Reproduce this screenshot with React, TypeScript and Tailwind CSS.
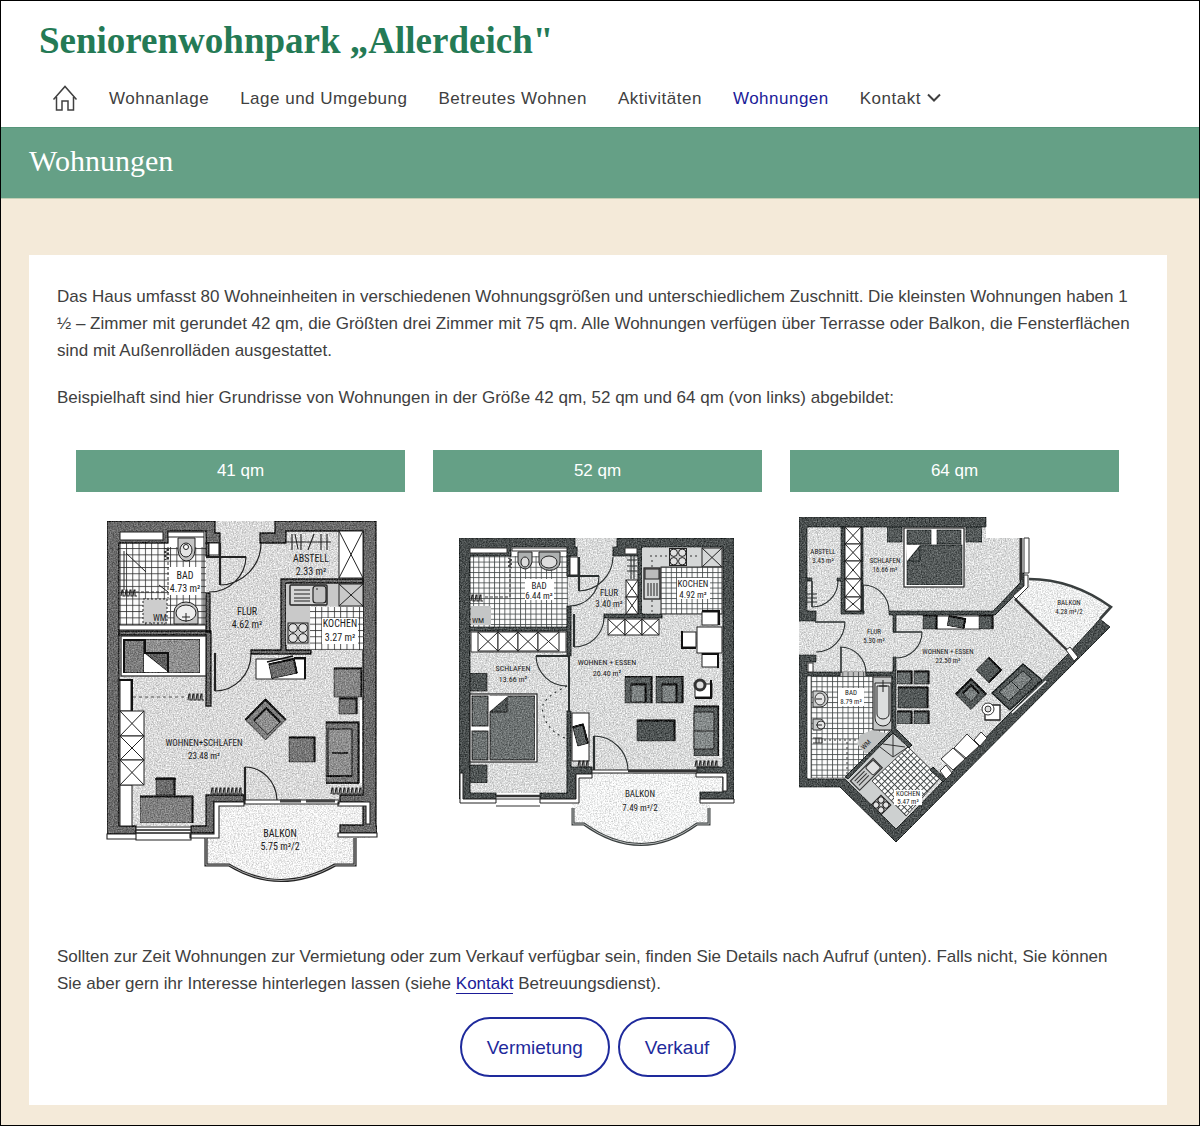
import React from 'react';

const NAV_ITEMS = [
  { label: 'Wohnanlage' },
  { label: 'Lage und Umgebung' },
  { label: 'Betreutes Wohnen' },
  { label: 'Aktivitäten' },
  { label: 'Wohnungen', active: true },
  { label: 'Kontakt', submenu: true }
];

const LABEL_FONT = '"Roboto Condensed", "Liberation Sans Narrow", Lato, sans-serif';

type Box = { x: number; y: number; w: number; h: number };

// shared patterns and the paper grain of the floor plans
const PlanDefs: React.FC = () => (
  <svg className="absolute w-0 h-0" aria-hidden="true">
    <defs>
      <pattern id="tiles" width="6.3" height="6.3" patternUnits="userSpaceOnUse">
        <rect width="6.3" height="6.3" fill="#fdfdfd" />
        <path d="M0 .5H6.3M.5 0V6.3" stroke="#2b2b2b" strokeWidth="0.8" />
      </pattern>
      <pattern id="tilesSmall" width="5.2" height="5.2" patternUnits="userSpaceOnUse">
        <rect width="5.2" height="5.2" fill="#fdfdfd" />
        <path d="M0 .5H5.2M.5 0V5.2" stroke="#3c4242" strokeWidth="0.8" />
      </pattern>
      <pattern id="tilesDiagonal" width="4.6" height="4.6" patternUnits="userSpaceOnUse" patternTransform="rotate(45)">
        <rect width="4.6" height="4.6" fill="#fdfdfd" />
        <path d="M0 .5H4.6M.5 0V4.6" stroke="#3c4242" strokeWidth="0.9" />
      </pattern>
      <filter id="grain" x="0" y="0" width="1" height="1" colorInterpolationFilters="sRGB">
        <feTurbulence type="fractalNoise" baseFrequency="0.75" numOctaves="2" seed="4" result="noise" />
        <feColorMatrix in="noise" values="1.6 0 0 0 -0.3  1.6 0 0 0 -0.3  1.6 0 0 0 -0.3  0 0 0 0 1" result="gray" />
        <feComposite in="SourceGraphic" in2="gray" operator="arithmetic" k1="0" k2="1" k3="0.32" k4="-0.16" result="mix" />
        <feComposite in="mix" in2="SourceGraphic" operator="in" />
      </filter>
    </defs>
  </svg>
);

const Label: React.FC<{ x: number; y: number; name: string; area: string; size?: number; gap?: number }> = ({
  x, y, name, area, size = 10, gap = 13
}) => (
  <g fontSize={size} textAnchor="middle" fill="#1c1c1c" style={{ fontFamily: LABEL_FONT }}>
    <text x={x} y={y}>{name}</text>
    <text x={x} y={y + gap}>{area}</text>
  </g>
);

// wardrobe box with a cross
const Crossed: React.FC<Box & { fill?: string }> = ({ x, y, w, h, fill = '#fff' }) => (
  <g stroke="#222" strokeWidth="1">
    <rect x={x} y={y} width={w} height={h} fill={fill} />
    <path d={`M${x} ${y}l${w} ${h}M${x + w} ${y}l${-w} ${h}`} />
  </g>
);

// dark piece of furniture with a heavy top and right edge
const Block: React.FC<Box & { fill?: string; rotate?: number }> = ({ x, y, w, h, fill = '#6c6c6c', rotate = 0 }) => (
  <g transform={`rotate(${rotate} ${x + w / 2} ${y + h / 2})`}>
    <rect x={x} y={y} width={w} height={h} fill={fill} stroke="#1c1c1c" strokeWidth="0.8" />
    <path d={`M${x} ${y + 0.5}H${x + w - 0.5}V${y + h}`} fill="none" stroke="#141414" strokeWidth="2" />
  </g>
);

const Stove: React.FC<{ x: number; y: number; s: number; rotate?: number }> = ({ x, y, s, rotate = 0 }) => (
  <g transform={`translate(${x} ${y}) rotate(${rotate})`} fill="#e2e2e2" stroke="#222" strokeWidth="1">
    <rect x={-s / 2} y={-s / 2} width={s} height={s} fill="#cfcfcf" />
    <circle cx={-s / 4} cy={-s / 4} r={s / 4.6} />
    <circle cx={s / 4} cy={-s / 4} r={s / 4.6} />
    <circle cx={-s / 4} cy={s / 4} r={s / 4.6} />
    <circle cx={s / 4} cy={s / 4} r={s / 4.6} />
  </g>
);

const Radiator: React.FC<{ x: number; y: number; w: number }> = ({ x, y, w }) => {
  const steps = Math.floor(w / 4);
  return <path d={`M${x} ${y + 6}` + 'l1 -6l1 0l0 6l2 0'.repeat(steps)} fill="none" stroke="#222" strokeWidth="1.1" />;
};

const Plan41: React.FC = () => (
  <svg viewBox="76 507 329 400" className="w-full h-auto" role="img" aria-label="Grundriss 41 qm">
    <g filter="url(#grain)">
      <path d="M119 531H215V521H275V531H364V826H119Z" fill="#d9d9d9" />
      <path d="M205 802H370V838H355V866H335Q280 897 229 866H205Z" fill="#efefef" />
    </g>
    {/* bathroom */}
    <rect x="119" y="531" width="87" height="100" fill="#fff" />
    <rect x="119" y="543" width="87" height="82" fill="url(#tiles)" />
    <rect x="169" y="537" width="34" height="10" fill="#fff" />
    <path d="M119 625H206M119 630H206M204 537V625" stroke="#222" strokeWidth="1" />
    <rect x="169" y="567" width="32" height="28" fill="#fff" />
    <rect x="143" y="599" width="24" height="24" fill="#cdcdcd" stroke="#222" strokeDasharray="2 2" />
    <path d="M168 547V598M121 592H166" stroke="#333" strokeDasharray="3 2" />
    <path d="M126 553L146 572M124 551V590M159 585L168 592" stroke="#222" strokeWidth="1" fill="none" />
    <path d="M178 538H195V550Q194 561 186 561Q179 560 178 550Z" fill="#c5c5c5" stroke="#222" />
    <ellipse cx="186" cy="550" rx="6" ry="7" fill="#e5e5e5" stroke="#222" />
    <circle cx="186" cy="547" r="2.5" fill="#fff" stroke="#222" />
    <path d="M174 624V612A12 10 0 0 1 198 612V624Z" fill="#c5c5c5" stroke="#222" />
    <ellipse cx="186" cy="613" rx="10" ry="8" fill="#eee" stroke="#222" />
    <path d="M186 613V622M182 617H190" stroke="#222" />
    <g fontSize="9" fill="#1c1c1c" style={{ fontFamily: LABEL_FONT }}>
      <text x="153" y="621">WM</text>
    </g>
    <Radiator x={121} y={590} w={16} />
    <path d="M164 548l5 2l-5 2l5 2l-5 2l5 2l-5 2" fill="none" stroke="#222" />
    {/* walls */}
    <g filter="url(#grain)" stroke="#111" strokeWidth="1.4" fill="#6a6a6a">
      <path d="M107 521H215V533H220V543H206V531H168V543H119V826H136V834H107Z" />
      <path d="M275 521H376V826H377V833H340V825H363V802H340V795H363V531H286V543H260V533H275Z" />
      <path d="M206 543H209V556H206ZM206 593H210V632H206ZM119 631H211V706H206V635H119Z" />
      <path d="M281 579H363V583H286V650H311V654H251V650H281Z" />
      <path d="M206 795H244V802H214V833H191V826H206Z" />
    </g>
    <path d="M120 532H163V540H120ZM168 532H204V537H168ZM209 543H219V555H209Z" fill="#fff" stroke="#222" />
    {/* doors */}
    <g fill="none" stroke="#222" strokeWidth="1.2">
      <path d="M246 557A37 36 0 0 1 209 592M220 585A42 42 0 0 0 261 543M251 654A36 37 0 0 1 215 691M245 767A32 34 0 0 1 277 800" />
      <path d="M206 557H246M220 543V585M215 653V691M245 767V801" strokeWidth="2.2" />
    </g>
    {/* storage and kitchen */}
    <path d="M286 542H331M292 534V550M295 534L298 549M301 534V550M314 534L308 550M321 534V550M327 534V550" stroke="#222" strokeWidth="1.1" />
    <Crossed x={339} y={531} w={24} h={47} />
    <path d="M286 584H339V606H310V645H286Z" fill="#c9c9c9" />
    <rect x="290" y="585" width="37" height="20" rx="1" fill="#d6d6d6" stroke="#222" strokeWidth="1.4" />
    <rect x="313" y="586" width="13" height="17" rx="3" fill="#c4c4c4" stroke="#222" strokeWidth="1.2" />
    <path d="M294 590H310M294 594H310M294 598H310M294 601H310M316 589h2" stroke="#222" />
    <Crossed x={339} y={584} w={24} h={22} fill="#c9c9c9" />
    <rect x="310" y="607" width="53" height="43" fill="url(#tiles)" />
    <rect x="322" y="618" width="36" height="26" fill="#fff" />
    <Stove x={298} y={633} s={20} />
    {/* bed */}
    <rect x="121" y="636" width="85" height="40" fill="#fff" stroke="#222" strokeWidth="1.2" />
    <g filter="url(#grain)">
      <rect x="124" y="639" width="76" height="34" fill="#909090" stroke="#111" strokeWidth="1.2" />
      <rect x="124" y="639" width="20" height="34" fill="#7c7c7c" stroke="#111" strokeWidth="1.2" />
      <path d="M145 653H168V672Z" fill="#606060" stroke="#111" />
    </g>
    <path d="M144 653V672H168Z" fill="#fff" />
    <path d="M124 673V640H145V653H168V672" fill="none" stroke="#111" strokeWidth="2" />
    <path d="M133 697H186" stroke="#555" strokeDasharray="3 3" />
    <Radiator x={188} y={694} w={16} />
    {/* left wall cupboards */}
    <path d="M120 680H131V711H120ZM120 785H132V826H120Z" fill="#fff" stroke="#222" />
    <path d="M119 680H132V711" fill="none" stroke="#111" strokeWidth="2" />
    <Crossed x={120} y={711} w={24} h={25} />
    <Crossed x={120} y={736} w={24} h={24} />
    <Crossed x={120} y={760} w={24} h={25} />
    {/* furniture */}
    <rect x="256" y="659" width="49" height="20" fill="#fff" stroke="#222" />
    <path d="M294 658H305V679" fill="none" stroke="#111" strokeWidth="2" />
    <g filter="url(#grain)">
      <Block x={270} y={661} w={26} h={15} rotate={-12} />
      <Block x={334} y={668} w={28} h={29} fill="#868686" />
      <Block x={339} y={698} w={18} h={16} fill="#777" />
      <Block x={251} y={705} w={29} h={29} rotate={-45} fill="#808080" />
      <Block x={258} y={711} w={18} h={20} rotate={-45} fill="#8f8f8f" />
      <Block x={289} y={737} w={26} h={25} fill="#777" />
      <Block x={326} y={722} w={33} h={61} fill="#777" />
      <rect x="328" y="729" width="24" height="47" fill="#8f8f8f" stroke="#111" />
      <path d="M326 776H352M326 783H359M332 753H348" stroke="#111" strokeWidth="1.6" />
      <Block x={156} y={778} w={19} h={17} />
      <Block x={140} y={796} w={53} h={27} fill="#808080" />
    </g>
    <path d="M155 779H176M267 662l26 -6" stroke="#111" strokeWidth="1.6" />
    <path d="M361 700V783" stroke="#fff" strokeWidth="2" />
    <Radiator x={211} y={788} w={32} />
    <Radiator x={331} y={788} w={32} />
    {/* windows and sills */}
    <path d="M136 827H191V840H136ZM107 834H136V839H107ZM214 802H244V806H219V838H190V834H214ZM338 802H370V824H366V806H338ZM338 833H377V837H338ZM245 800H339V804H245Z" fill="#fff" stroke="#222" strokeWidth="1.1" />
    <path d="M136 830H191M136 833H191" stroke="#222" strokeWidth="1.3" />
    <path d="M280 801H301M306 801H335" stroke="#444" strokeWidth="3" />
    <path d="M206 838V865H229Q280 896 335 865H355V838" fill="none" stroke="#222" strokeWidth="3.2" />
    <path d="M206 838V865H229Q280 896 335 865H355V838" fill="none" stroke="#aaa" strokeWidth="1" />
    <Label x={185} y={579} name="BAD" area="4.73 m²" />
    <Label x={311} y={562} name="ABSTELL" area="2.33 m²" />
    <Label x={247} y={615} name="FLUR" area="4.62 m²" />
    <Label x={340} y={627} name="KOCHEN" area="3.27 m²" gap={14} />
    <Label x={204} y={746} name="WOHNEN+SCHLAFEN" area="23.48 m²" size={9} />
    <Label x={280} y={837} name="BALKON" area="5.75 m²/2" />
  </svg>
);

const Plan52: React.FC = () => (
  <svg viewBox="433 507 329 400" className="w-full h-auto" role="img" aria-label="Grundriss 52 qm">
    <g filter="url(#grain)">
      <path d="M470 547H576V538H617V547H723V793H470Z" fill="#d9dada" />
      <path d="M576 774H726V791H710V825H697Q641 865 584 825H572V803H576Z" fill="#f1f2f2" />
    </g>
    {/* bathroom */}
    <rect x="470" y="547" width="97" height="10" fill="#fff" />
    <rect x="470" y="556" width="98" height="71" fill="url(#tilesSmall)" />
    <rect x="525" y="579" width="29" height="21" fill="#fff" />
    <rect x="471" y="606" width="20" height="19" fill="#c4c6c6" />
    <g fontSize="8" fill="#222" style={{ fontFamily: LABEL_FONT }}>
      <text x="472" y="623">WM</text>
    </g>
    <Radiator x={471} y={595} w={14} />
    <path d="M485 597H510V556" fill="none" stroke="#333" strokeDasharray="3 2" />
    <path d="M508 558l4 2l-4 2l4 2l-4 2l4 2" fill="none" stroke="#333" />
    <path d="M518 552H532V562Q530 569 525 569Q519 568 518 562Z" fill="#aeb1b1" stroke="#222" />
    <ellipse cx="525" cy="562" rx="4" ry="5" fill="#ddd" stroke="#222" />
    <path d="M539 552H560V562A10 8 0 0 1 539 562Z" fill="#aeb1b1" stroke="#222" />
    <ellipse cx="549" cy="562" rx="8" ry="6" fill="#ddd" stroke="#222" />
    {/* walls */}
    <g filter="url(#grain)" stroke="#1d2222" strokeWidth="1.2" fill="#4a4f4f">
      <path d="M459 538H575V547H577V556H567V547H511V556H470V793H496V799H459Z" />
      <path d="M617 538H734V799H700V792H723V774H697V767H723V547H642V614H662V618H604V614H638V556H613V547H617Z" />
      <path d="M567 556H570V576H567ZM567 606H571V656H567V631H470V627H567ZM567 711H571V767H592V774H576V799H540V793H567Z" />
    </g>
    <path d="M470 548H507V553H470ZM512 548H567V551H512ZM570 557H578V575H570ZM625 548H637V554H625Z" fill="#fff" stroke="#333" />
    <g fill="none" stroke="#2a2f2f" strokeWidth="1.1">
      <path d="M613 557A35 35 0 0 1 579 591M599 576A29 30 0 0 1 570 606M604 618A30 30 0 0 1 574 647M536 656A31 31 0 0 0 567 686M594 736A34 35 0 0 1 628 771" />
      <path d="M579 557V591M567 576H599M574 614V647M536 656H568M594 736V773" strokeWidth="2.2" />
      <path d="M569 656V711" strokeWidth="2" />
      <path d="M567 686Q538 700 543 712Q546 730 565 738" strokeDasharray="2 4" />
      <path d="M627 560H637M627 566H637M627 571H637M631 556V579M634 556V579" />
    </g>
    <Crossed x={626} y={580} w={12} h={17} />
    <Crossed x={626} y={597} w={12} h={17} />
    {/* kitchen */}
    <path d="M642 548H722V567H661V613H642Z" fill="#d5d7d7" />
    <path d="M650 556H700M652 560V612" stroke="#333" strokeDasharray="2 3" />
    <Crossed x={702} y={548} w={20} h={19} fill="#d5d7d7" />
    <Stove x={678} y={557} s={17} />
    <rect x="661" y="567" width="61" height="47" fill="url(#tilesSmall)" stroke="#333" />
    <rect x="677" y="578" width="33" height="21" fill="#fff" />
    <rect x="644" y="568" width="16" height="31" fill="#d5d7d7" stroke="#222" strokeWidth="1.3" />
    <rect x="645" y="569" width="14" height="10" fill="#bbb" stroke="#222" />
    <path d="M648 583V596M651 583V596M654 583V596M657 583V596" stroke="#222" />
    {/* wardrobes */}
    <Crossed x={608} y={619} w={17} h={16} />
    <Crossed x={625} y={619} w={17} h={16} />
    <Crossed x={642} y={619} w={17} h={16} />
    <rect x="471" y="632" width="95" height="20" fill="#fff" stroke="#333" />
    <Crossed x={478} y={632} w={20} h={19} />
    <Crossed x={498} y={632} w={20} h={19} />
    <Crossed x={518} y={632} w={20} h={19} />
    <Crossed x={538} y={632} w={21} h={19} />
    {/* bedroom */}
    <rect x="470" y="694" width="67" height="68" fill="#fff" stroke="#222" strokeWidth="1.2" />
    <g filter="url(#grain)">
      <rect x="470" y="673" width="17" height="18" fill="#4f5454" stroke="#222" />
      <rect x="470" y="765" width="17" height="18" fill="#4f5454" stroke="#222" />
      <rect x="472" y="696" width="16" height="30" fill="#6d7272" stroke="#222" strokeWidth="1.2" />
      <rect x="472" y="731" width="16" height="29" fill="#6d7272" stroke="#222" strokeWidth="1.2" />
      <rect x="490" y="696" width="45" height="64" fill="#6d7272" stroke="#222" strokeWidth="1.2" />
      <path d="M490 712L507 697V712Z" fill="#4f5454" stroke="#222" />
    </g>
    <path d="M489 696H508L489 712Z" fill="#fff" />
    {/* dining and living */}
    <g fill="#fff" stroke="#222" strokeWidth="1">
      <rect x="702" y="612" width="16" height="13" />
      <rect x="682" y="632" width="14" height="15" />
      <rect x="702" y="653" width="16" height="14" />
      <rect x="697" y="627" width="25" height="26" />
      <rect x="695" y="684" width="17" height="13" />
      <rect x="572" y="713" width="17" height="48" />
    </g>
    <path d="M702 611H719V625M682 631V648H696M702 654H718V668M711 680V698H695" fill="none" stroke="#111" strokeWidth="2" />
    <circle cx="700" cy="685" r="5" fill="#ddd" stroke="#333" strokeWidth="3" />
    <g filter="url(#grain)">
      <Block x={625} y={676} w={27} h={27} fill="#5a5f5f" />
      <Block x={631} y={684} w={15} h={18} fill="#7d8282" />
      <Block x={656} y={676} w={27} h={27} fill="#5a5f5f" />
      <Block x={662} y={684} w={15} h={18} fill="#7d8282" />
      <Block x={637} y={720} w={38} h={21} fill="#4f5454" />
      <Block x={694} y={706} w={25} h={50} fill="#5a5f5f" />
      <rect x="694" y="712" width="20" height="37" fill="#858a8a" stroke="#222" />
      <path d="M694 731H714" stroke="#222" />
      <Block x={575} y={725} w={11} h={20} rotate={-15} fill="#5a5f5f" />
    </g>
    <path d="M721 700V758" stroke="#fff" strokeWidth="1.6" />
    <Radiator x={695} y={761} w={27} />
    <Radiator x={578} y={761} w={14} />
    {/* windows and sills */}
    <path d="M460 773H463V799H496V803H460ZM576 774H592V778H579V803H540V799H576ZM696 773H727V791H723V777H696ZM700 799H734V803H700ZM592 770H697V773H592Z" fill="#fff" stroke="#222" strokeWidth="1" />
    <path d="M628 771H697M496 796H540" stroke="#333" strokeWidth="2.4" />
    <path d="M496 799H540M496 806H540" stroke="#333" strokeWidth="1.2" />
    <path d="M573 808V824H584Q641 865 697 824H709V808" fill="none" stroke="#3a3f3f" strokeWidth="3" />
    <path d="M573 808V824H584Q641 865 697 824H709V808" fill="none" stroke="#b5b8b8" strokeWidth="1" />
    <Label x={539} y={589} name="BAD" area="6.44 m²" size={9} gap={10} />
    <Label x={609} y={596} name="FLUR" area="3.40 m²" size={9} gap={11} />
    <Label x={693} y={587} name="KOCHEN" area="4.92 m²" size={9} gap={11} />
    <Label x={513} y={671} name="SCHLAFEN" area="13.66 m²" size={8} gap={11} />
    <Label x={607} y={665} name="WOHNEN + ESSEN" area="20.40 m²" size={8} gap={11} />
    <Label x={640} y={797} name="BALKON" area="7.49 m²/2" size={9} gap={14} />
  </svg>
);

const Plan64: React.FC = () => (
  <svg viewBox="790 507 329 400" className="w-full h-auto" role="img" aria-label="Grundriss 64 qm">
    <g filter="url(#grain)">
      <path d="M807 527H986V538H1021V583L1015 598L1072 655L896 829L845 779H807V655H799V620H807Z" fill="#dadbdb" />
      <path d="M1029 579Q1072 579 1111 607L1100 620L1072 655L1014 598Z" fill="#eceded" />
    </g>
    {/* bathroom */}
    <path d="M807 676H811V778H807Z" fill="#fff" />
    <path d="M811 674H873V730H890L846 778H811ZM840 672H866V676H840Z" fill="url(#tilesSmall)" stroke="#333" strokeWidth="0.6" />
    <rect x="838" y="688" width="26" height="18" fill="#fff" />
    <rect x="873" y="677" width="19" height="53" fill="#c4c6c6" stroke="#222" />
    <path d="M875 683H891V718A8 8 0 0 1 875 718Z" fill="#dcdede" stroke="#222" />
    <path d="M877 686H889V714A6 5 0 0 1 877 714ZM883 680V692M879 686H887" fill="none" stroke="#222" />
    <path d="M813 691H820A8 8 0 0 1 820 707H813ZM813 719H821A6 6 0 0 1 821 730H813Z" fill="#c8caca" stroke="#333" />
    <ellipse cx="820" cy="699" rx="5" ry="6" fill="#e5e5e5" stroke="#333" />
    <ellipse cx="821" cy="725" rx="4" ry="4" fill="#e5e5e5" stroke="#333" />
    <path d="M816 699H822M816 725H822" stroke="#222" />
    <path d="M860 735L872 730L890 734L866 754L857 744Z" fill="#c1c3c3" />
    <path d="M824 740H858M847 742V776" stroke="#333" strokeDasharray="2 3" />
    <path d="M813 738h9v5h-9M816 738v5M819 738v5" fill="none" stroke="#333" />
    <g fontSize="7" fill="#222" style={{ fontFamily: LABEL_FONT }}>
      <text x="864" y="750" transform="rotate(-45 864 750)">WM</text>
    </g>
    {/* kitchen */}
    <path d="M893 734L908 748L872 781L906 816L896 828L846 779Z" fill="#cdd0d0" />
    <path d="M872 781L908 747L940 778L906 816Z" fill="url(#tilesDiagonal)" stroke="#333" strokeWidth="0.8" />
    <path d="M893 733V757M880 747L893 757L908 747M883 744L905 747" fill="none" stroke="#333" />
    <g transform="rotate(-45 866 774)">
      <rect x="850" y="768" width="32" height="13" fill="#c8caca" stroke="#333" strokeWidth="1.2" />
      <rect x="870" y="769" width="11" height="11" rx="2" fill="#e0e0e0" stroke="#333" />
      <path d="M853 771H867M853 774H867M853 777H867" stroke="#333" />
    </g>
    <Stove x={881} y={805} s={14} rotate={45} />
    {/* walls */}
    <g filter="url(#grain)" fill="#4a4f4f" stroke="#1d2222" strokeWidth="1">
      <path d="M799 517H986V527H807V611H816V621H799Z" />
      <path d="M799 655H816V662H807V672H840V676H807V779H845L896 829L1067 655L1100 619L1110 627L896 842L840 787H799Z" />
      <path d="M807 578H812V581H807ZM841 527H845V611H864V614H841V581H837V578H841ZM861 527H863V611H861Z" />
      <path d="M889 611H993L1020 583V573H1024V586L995 615H896V632H893V615H889ZM866 672H893V657H896V729L912 745L909 748L893 733L848 779L845 777L892 730V676H866Z" />
      <path d="M930 770L933 767L946 779L943 782Z" />
    </g>
    <rect x="808" y="663" width="5" height="9" fill="#fff" stroke="#333" />
    <path d="M1021 538V580" stroke="#333" strokeWidth="3" />
    <path d="M1024 538H1029V573H1024ZM1024 575H1028V587L1016 599L1013 596L1024 586Z" fill="#fff" stroke="#333" />
    <path d="M1029 579Q1072 579 1111 607L1100 619" fill="none" stroke="#3a3f3f" strokeWidth="2.6" />
    <path d="M1015 599L1072 655" stroke="#333" strokeWidth="2.4" />
    <path d="M1066 650L1070 647L1078 657L1074 661Z" fill="#fff" stroke="#333" />
    {/* doors */}
    <g fill="none" stroke="#2a2f2f" strokeWidth="1.1">
      <path d="M838 581A26 26 0 0 1 812 607M863 585A26 26 0 0 1 889 611M845 622A29 31 0 0 1 816 652M840 647A26 26 0 0 1 866 673M922 632A26 26 0 0 1 896 658" />
      <path d="M812 581V607M863 585V611M815 622H845M841 647V673M893 632H922" strokeWidth="1.6" />
      <path d="M806 594H817M806 598H817M806 602H817" />
    </g>
    <Crossed x={845} y={527} w={16} h={17} />
    <Crossed x={845} y={544} w={16} h={17} />
    <Crossed x={845} y={561} w={16} h={18} />
    <Crossed x={845} y={579} w={16} h={18} />
    <Crossed x={845} y={597} w={16} h={14} />
    {/* bedroom */}
    <rect x="904" y="528" width="60" height="59" fill="#fff" stroke="#222" strokeWidth="1.2" />
    <g filter="url(#grain)" fill="#555a5a" stroke="#1d2222">
      <rect x="887" y="527" width="15" height="15" />
      <rect x="966" y="527" width="16" height="15" />
      <rect x="907" y="530" width="24" height="14" />
      <rect x="937" y="530" width="24" height="14" />
      <rect x="907" y="545" width="55" height="40" />
      <path d="M908 561L920 546V561Z" />
    </g>
    <path d="M906 545H920L907 561Z" fill="#fff" />
    {/* living room */}
    <rect x="936" y="616" width="44" height="13" fill="#fff" stroke="#333" />
    <g filter="url(#grain)">
      <Block x={923} y={615} w={14} h={14} fill="#555a5a" />
      <Block x={979} y={615} w={14} h={14} fill="#555a5a" />
      <Block x={948} y={617} w={17} h={10} rotate={10} fill="#555a5a" />
      <Block x={897} y={671} w={15} h={13} fill="#6a6f6f" />
      <Block x={914} y={671} w={15} h={13} fill="#6a6f6f" />
      <Block x={898} y={687} w={30} h={21} fill="#555a5a" />
      <Block x={897} y={711} w={15} h={13} fill="#6a6f6f" />
      <Block x={914} y={711} w={15} h={13} fill="#6a6f6f" />
      <Block x={980} y={661} w={18} h={18} rotate={45} fill="#555a5a" />
      <Block x={960} y={683} w={22} h={22} rotate={-45} fill="#555a5a" />
      <Block x={965} y={687} w={12} h={12} rotate={-45} fill="#7d8282" />
      <path d="M992 693L1023 664L1042 680L1010 710Z" fill="#555a5a" stroke="#1d2222" strokeWidth="1.6" />
      <path d="M999 692L1023 671L1032 679L1009 701ZM1011 681L1020 690" fill="#7d8282" stroke="#1d2222" />
    </g>
    <path d="M1012 713L1046 681" stroke="#fff" strokeWidth="1.6" />
    <path d="M985 705H1000V720H985Z" fill="#fff" stroke="#222" strokeWidth="1.3" />
    <circle cx="988" cy="709" r="6" fill="#fff" stroke="#333" />
    <circle cx="988" cy="709" r="3" fill="#ddd" stroke="#333" />
    <path d="M940 771L946 765L952 773L946 779ZM941 759L953 748L965 759L953 770ZM954 748L967 734L979 746L966 758ZM974 740L981 732L987 738L980 746Z" fill="#fff" stroke="#333" strokeWidth="1" />
    <Label x={823} y={554} name="ABSTELL" area="3.45 m²" size={7} gap={9} />
    <Label x={885} y={563} name="SCHLAFEN" area="16.66 m²" size={7} gap={9} />
    <Label x={874} y={634} name="FLUR" area="5.30 m²" size={7} gap={9} />
    <Label x={948} y={654} name="WOHNEN + ESSEN" area="22.50 m²" size={7} gap={9} />
    <Label x={851} y={695} name="BAD" area="8.79 m²" size={7} gap={9} />
    <rect x="894" y="790" width="28" height="15" fill="#fff" />
    <Label x={908} y={796} name="KOCHEN" area="5.47 m²" size={7} gap={8} />
    <Label x={1069} y={605} name="BALKON" area="4.28 m²/2" size={7} gap={9} />
  </svg>
);

const PLANS = [
  { title: '41 qm', Plan: Plan41 },
  { title: '52 qm', Plan: Plan52 },
  { title: '64 qm', Plan: Plan64 }
];

const App: React.FC = () => {
  return (
    <div className="min-h-screen border border-black bg-[#f4ead9] font-['Liberation_Sans',Arial,sans-serif] text-[17px] leading-[27px] text-[#404040]">
      <PlanDefs />
      <header className="bg-white px-[38px] pt-5 pb-2">
        <div className="font-['Liberation_Serif',serif] text-[37px] leading-[40px] font-bold text-[#247a55]">
          Seniorenwohnpark „Allerdeich"
        </div>
        <nav className="mt-4 pl-[13px]" aria-label="Hauptmenü">
          <ul className="flex h-[42px] items-center gap-[31px] tracking-[0.5px] whitespace-nowrap">
            <li>
              <a href="#start" aria-label="Startseite">
                <svg width="26" height="26" viewBox="0 0 26 26" fill="none" stroke="#404040" strokeWidth="1.5">
                  <path d="M1.5 14.5L13 1.5L24.5 14.5M4.5 12V25H10V16H16V25H21.5V12" />
                </svg>
              </a>
            </li>
            {NAV_ITEMS.map((item) => (
              <li key={item.label}>
                <a href={`#${item.label}`} className={`flex items-center ${item.active ? 'text-[#1b1b98]' : ''}`}>
                  {item.label}
                  {item.submenu && (
                    <svg className="ml-[6px]" width="14" height="10" viewBox="0 0 14 10" fill="none" stroke="#404040" strokeWidth="2">
                      <path d="M1 1.5L7 7.5L13 1.5" />
                    </svg>
                  )}
                </a>
              </li>
            ))}
          </ul>
        </nav>
      </header>

      <div className="bg-[#65a086] border-t border-b border-t-[#56957a] border-b-[#c3cfb5] px-7 pt-[17px] pb-[21px]">
        <h1 className="font-['Liberation_Serif',serif] text-[30px] leading-[32px] text-white">Wohnungen</h1>
      </div>

      <main className="mt-14 mb-5 ml-7 mr-8 bg-white p-7">
        <p>
          Das Haus umfasst 80 Wohneinheiten in verschiedenen Wohnungsgrößen und unterschiedlichem Zuschnitt. Die kleinsten Wohnungen haben 1 ½ – Zimmer mit gerundet 42 qm, die Größten drei Zimmer mit 75 qm. Alle Wohnungen verfügen über Terrasse oder Balkon, die Fensterflächen sind mit Außenrolläden ausgestattet.
        </p>
        <p className="mt-5">
          Beispielhaft sind hier Grundrisse von Wohnungen in der Größe 42 qm, 52 qm und 64 qm (von links) abgebildet:
        </p>

        <div className="mt-[39px] grid grid-cols-3 gap-7 pl-[19px] pr-5">
          {PLANS.map(({ title, Plan }) => (
            <section key={title}>
              <h2 className="bg-[#65a086] py-[7px] leading-[28px] text-center text-white">{title}</h2>
              <div className="mt-[15px]">
                <Plan />
              </div>
            </section>
          ))}
        </div>

        <p className="mt-9 pr-4">
          Sollten zur Zeit Wohnungen zur Vermietung oder zum Verkauf verfügbar sein, finden Sie Details nach Aufruf (unten). Falls nicht, Sie können Sie aber gern ihr Interesse hinterlegen lassen (siehe{' '}
          <a href="#kontakt" className="border-b border-[#1b1b98] text-[#1b1b98]">Kontakt</a> Betreuungsdienst).
        </p>

        <div className="mt-5 flex justify-center gap-2 text-[19px] text-[#1e2a9c]">
          <button type="button" className="h-[60px] rounded-full border-2 border-[#1e2a9c] px-[25px]">Vermietung</button>
          <button type="button" className="h-[60px] rounded-full border-2 border-[#1e2a9c] px-[25px]">Verkauf</button>
        </div>
      </main>
    </div>
  );
};

export default App;
